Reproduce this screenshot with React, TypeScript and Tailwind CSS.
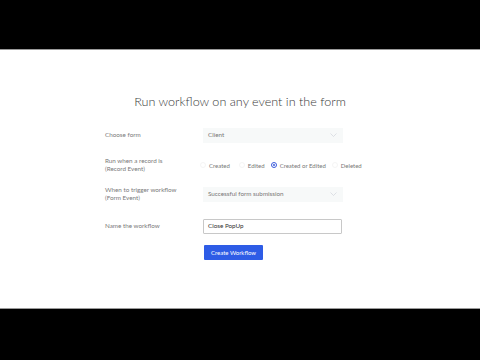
import React from 'react';

const Chevron = () => (
  <svg width="7" height="4" viewBox="0 0 7 4" fill="none" className="text-gray-300">
    <path d="M0.5 0.5l3 3 3-3" stroke="currentColor" strokeWidth="0.7" />
  </svg>
);

const Radio = ({ label, checked, className = '' }: { label: string; checked?: boolean; className?: string }) => (
  <label className={`flex items-center gap-[3px] ${className}`}>
    <span
      className={`flex h-[6px] w-[6px] items-center justify-center rounded-full border ${
        checked ? 'border-[#3b5bdb]' : 'border-[#f5f5f5]'
      }`}
    >
      {checked && <span className="h-[2px] w-[2px] rounded-full bg-[#3b5bdb]" />}
    </span>
    <span>{label}</span>
  </label>
);

export default function App() {
  return (
    <div className="flex h-[360px] w-[480px] flex-col bg-black font-['Lato',sans-serif]">
      <div className="h-[50px] border-b border-[#9a9a9a]" />
      <div className="flex h-[258px] flex-col bg-white">
        <h1 className="mt-[44px] text-center text-[12.6px] font-light leading-[16px] text-[#3a3a3a]">
          Run workflow on any event in the form
        </h1>

        <div className="ml-[105px] mt-[17px] flex flex-col text-[6.3px] text-[#7a7a7a]">
          <div className="flex h-[16px] items-center">
            <span className="w-[98px]">Choose form</span>
            <div className="flex h-[15px] w-[140px] items-center justify-between bg-[#f7f9f9] pl-[5px] pr-[6px]">
              <span className="text-[#777]">Client</span>
              <Chevron />
            </div>
          </div>

          <div className="mt-[13px] flex h-[18px] items-center">
            <div className="flex w-[95px] flex-col leading-[8px]">
              <span>Run when a record is</span>
              <span>(Record Event)</span>
            </div>
            <div className="flex items-center text-[6px] text-[#777]">
              <Radio label="Created" />
              <Radio label="Edited" className="ml-[9px]" />
              <Radio label="Created or Edited" checked className="ml-[6px]" />
              <Radio label="Deleted" className="ml-[6px]" />
            </div>
          </div>

          <div className="mt-[12px] flex h-[16px] items-center">
            <div className="flex w-[98px] flex-col leading-[8px]">
              <span>When to trigger workflow</span>
              <span>(Form Event)</span>
            </div>
            <div className="flex h-[15px] w-[140px] items-center justify-between bg-[#f7f9f9] pl-[5px] pr-[6px]">
              <span className="text-[#777]">Successful form submission</span>
              <Chevron />
            </div>
          </div>

          <div className="mt-[16px] flex h-[16px] items-center">
            <span className="w-[98px]">Name the workflow</span>
            <div className="flex h-[15px] w-[139px] items-center rounded-[1px] border border-[#c8c8c8] bg-white pl-[4px] text-[#333]">
              Close PopUp
            </div>
          </div>

          <div className="mt-[11px] flex">
            <span className="w-[99px]" />
            <button className="flex h-[15px] w-[59px] items-center justify-center rounded-[1px] bg-[#2e5ce6] text-[6px] text-white">
              Create Workflow
            </button>
          </div>
        </div>
      </div>
      <div className="flex-1 border-t border-[#9a9a9a]" />
    </div>
  );
}
